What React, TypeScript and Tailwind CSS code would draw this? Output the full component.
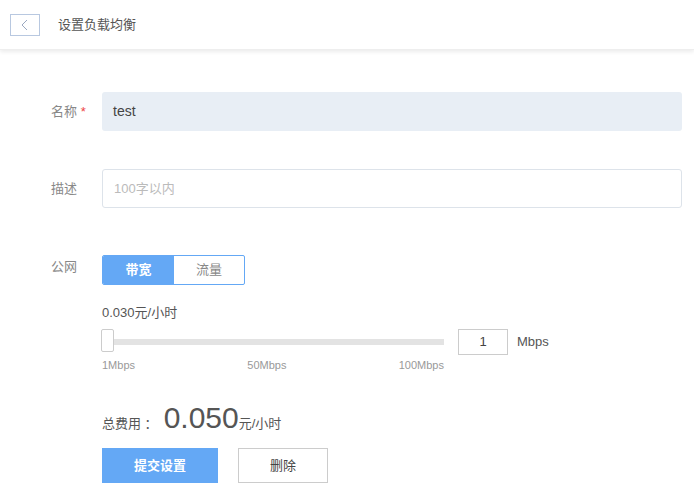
export default function App() {
  const font = { fontFamily: '"Liberation Sans", "Noto Sans CJK SC", sans-serif' };
  return (
    <div className="w-[694px] h-[493px] bg-white text-[13px] text-[#555]" style={font}>
      <div className="h-[50px] flex items-center pl-[10px] shadow-[0_2px_4px_rgba(0,0,0,0.08)] border-b border-[#eee]">
        <button className="w-[30px] h-[22px] border border-[#b8c8e0] flex items-center justify-center text-[#8aa]">
          <svg width="10" height="12" viewBox="0 0 10 12"><path d="M7 1 L2 6 L7 11" fill="none" stroke="#9aa8c0" strokeWidth="1" /></svg>
        </button>
        <span className="ml-[18px] text-[#555]">设置负载均衡</span>
      </div>
      <div className="pl-[51px] pr-[12px]">
        <div className="flex items-center mt-[42px]">
          <div className="w-[51px] text-[#888]">名称 <span className="text-[#e44]">*</span></div>
          <div className="flex-1 h-[39px] bg-[#e8eef5] rounded-[3px] flex items-center px-[11px] text-[14px] text-[#444]">test</div>
        </div>
        <div className="flex items-center mt-[38px]">
          <div className="w-[51px] text-[#888]">描述</div>
          <div className="flex-1 h-[39px] border border-[#dde3ea] rounded-[3px] flex items-center px-[11px] text-[#bbb]">100字以内</div>
        </div>
        <div className="flex mt-[47px]">
          <div className="w-[51px] text-[#888] pt-[2px]">公网</div>
          <div>
            <div className="flex w-[143px] h-[30px] border border-[#64a8f5] rounded-[2px] overflow-hidden">
              <div className="w-[71px] bg-[#64a8f5] text-white flex items-center justify-center font-bold">带宽</div>
              <div className="flex-1 flex items-center justify-center text-[#888]">流量</div>
            </div>
            <div className="mt-[18px] text-[#555]">0.030元/小时</div>
            <div className="flex items-center mt-[6px]">
              <div className="relative w-[342px] h-[26px] flex items-center">
                <div className="w-full h-[6px] bg-[#e3e3e3]" />
                <div className="absolute left-[-1px] top-0 w-[13px] h-[23px] bg-white border border-[#ccc] rounded-[2px]" />
              </div>
              <div className="ml-[14px] w-[50px] h-[26px] border border-[#ccc] flex items-center justify-center text-[#444]">1</div>
              <div className="ml-[9px] text-[#555]">Mbps</div>
            </div>
            <div className="flex justify-between w-[342px] text-[11px] text-[#999] mt-[2px]">
              <span>1Mbps</span><span>50Mbps</span><span>100Mbps</span>
            </div>
            <div className="flex items-baseline mt-[22px] -ml-[51px] pl-[51px]">
              <span className="text-[#555]">总费用 ：</span>
              <span className="text-[30px] text-[#555] ml-[6px]">0.050</span>
              <span className="text-[#555]">元/小时</span>
            </div>
            <div className="flex mt-[8px]">
              <button className="w-[116px] h-[35px] bg-[#64a8f5] text-white font-bold">提交设置</button>
              <button className="ml-[20px] w-[90px] h-[35px] border border-[#ccc] text-[#444]">删除</button>
            </div>
          </div>
        </div>
      </div>
    </div>
  );
}
